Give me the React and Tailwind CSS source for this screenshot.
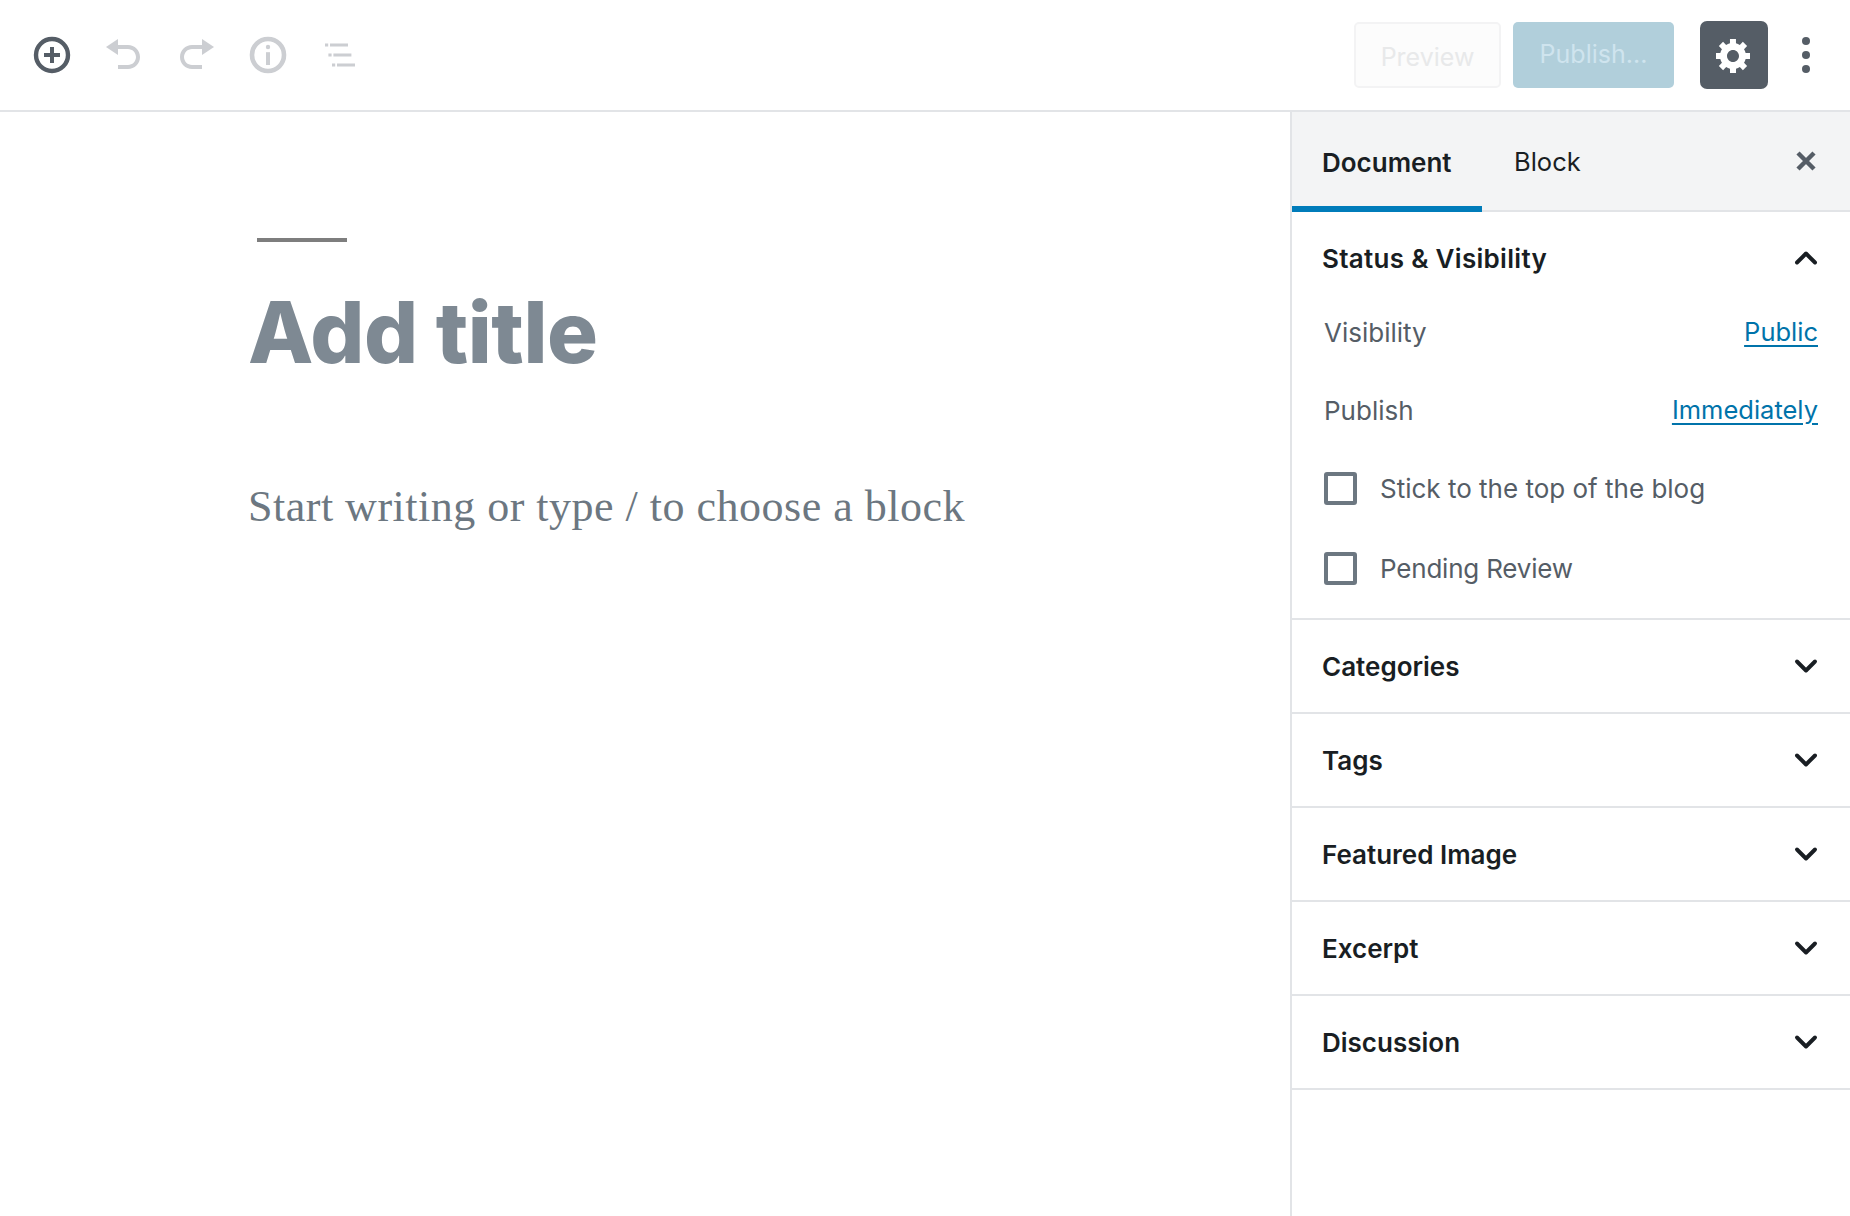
import { ChevronDown, ChevronUp } from 'lucide-react';

const Glyph = ({ children, className }) => (
  <svg viewBox="0 0 20 20" className={`w-10 h-10 ${className}`} fill="currentColor">
    {children}
  </svg>
);

const sections = ['Categories', 'Tags', 'Featured Image', 'Excerpt', 'Discussion'];

const Toolbar = () => (
  <header className="h-[112px] shrink-0 flex items-center pl-[16px] pr-[24px] bg-white border-b-2 border-[#e2e4e7]">
    <div className="w-[72px] flex justify-center">
      <Glyph className="text-[#555d66]">
        <circle cx="10" cy="10" r="8" fill="none" stroke="currentColor" strokeWidth="2.2" />
        <path d="M9 6h2v3h3v2h-3v3H9v-3H6V9h3z" />
      </Glyph>
    </div>
    <div className="w-[72px] flex justify-center">
      <Glyph className="text-[#ccced2]">
        <path d="M12 5H7V2L1 6l6 4V7h5c2.2 0 4 1.8 4 4s-1.8 4-4 4H7v2h5c3.3 0 6-2.7 6-6s-2.7-6-6-6z" />
      </Glyph>
    </div>
    <div className="w-[72px] flex justify-center">
      <Glyph className="text-[#ccced2]">
        <path d="M8 5h5V2l6 4-6 4V7H8c-2.2 0-4 1.8-4 4s1.8 4 4 4h5v2H8c-3.3 0-6-2.7-6-6s2.7-6 6-6z" />
      </Glyph>
    </div>
    <div className="w-[72px] flex justify-center">
      <Glyph className="text-[#ccced2]">
        <circle cx="10" cy="10" r="8" fill="none" stroke="currentColor" strokeWidth="2.3" />
        <rect x="9" y="8.6" width="2" height="6.4" />
        <circle cx="10" cy="6" r="1.1" />
      </Glyph>
    </div>
    <div className="w-[72px] flex justify-center">
      <Glyph className="text-[#ccced2]">
        <path d="M2.5 4.2h1.6v1.6H2.5zM5 4.25h9v1.5H5zM4.2 9.2h1.6v1.6H4.2zM6.7 9.25h9v1.5h-9zM6 14.2h1.6v1.6H6zM8.5 14.25h9v1.5h-9z" />
      </Glyph>
    </div>

    <button className="ml-auto w-[147px] h-[66px] rounded-[5px] border-2 border-[#f3f3f4] bg-[#fcfcfc] text-[#e8e9ea] text-[25px] pt-[5px]">
      Preview
    </button>
    <button className="ml-[12px] w-[161px] h-[66px] rounded-[5px] bg-[#b1cfdb] text-[#cfe4ee] text-[25px]">
      Publish...
    </button>
    <button className="ml-[26px] w-[68px] h-[68px] rounded-[7px] bg-[#555d66] text-white flex items-center justify-center">
      <Glyph>
        <path d="M18 12h-2.18c-.17.7-.44 1.35-.81 1.93l1.54 1.54-2.1 2.1-1.54-1.54c-.58.36-1.23.64-1.91.81V19H8v-2.16c-.68-.17-1.33-.45-1.91-.81l-1.54 1.54-2.12-2.12 1.54-1.54c-.36-.58-.64-1.23-.81-1.91H1V9h2.16c.17-.7.44-1.35.81-1.93L2.43 5.53l2.1-2.1 1.54 1.54c.58-.36 1.23-.64 1.91-.81V2h3v2.16c.68.17 1.33.45 1.91.81l1.54-1.54 2.12 2.12-1.54 1.54c.36.58.64 1.23.81 1.91H18v3zm-8.5 1.5c1.66 0 3-1.34 3-3s-1.34-3-3-3-3 1.34-3 3 1.34 3 3 3z" />
      </Glyph>
    </button>
    <div className="ml-[18px] w-10 flex flex-col items-center gap-[6px]">
      <span className="w-2 h-2 rounded-full bg-[#555d66]" />
      <span className="w-2 h-2 rounded-full bg-[#555d66]" />
      <span className="w-2 h-2 rounded-full bg-[#555d66]" />
    </div>
  </header>
);

const Editor = () => (
  <main className="flex-1 pl-[248px] pt-[126px]">
    <div className="ml-[9px] w-[90px] h-[4px] bg-[#7e7e7e]" />
    <h1 className="mt-[41px] h-[100px] leading-[100px] text-[85px] font-extrabold tracking-[-0.5px] text-[#7e8993]">
      Add title
    </h1>
    <p className="mt-[94px] font-['Liberation_Serif',serif] text-[44px] leading-[60px] tracking-[0.5px] text-[#6c7781]">
      Start writing or type / to choose a block
    </p>
  </main>
);

const Sidebar = () => (
  <aside className="w-[560px] shrink-0 border-l-2 border-[#e2e4e7] flex flex-col">
    <div className="h-[100px] shrink-0 bg-[#f3f4f5] border-b-2 border-[#e2e4e7] flex items-stretch">
      <div className="relative w-[190px] flex items-center pl-[30px] pt-[2px] font-semibold text-[26px] text-[#191e23]">
        Document
        <span className="absolute left-0 right-0 bottom-[-2px] h-[6px] bg-[#007cba]" />
      </div>
      <div className="ml-[32px] pt-[3px] flex items-center text-[25.5px] text-[#191e23]">Block</div>
      <svg viewBox="0 0 20 20" className="ml-auto mr-[28px] w-8 h-8 self-center text-[#555d66]" fill="none" stroke="currentColor" strokeWidth="2.8">
        <path d="M5 5l10 10M15 5L5 15" />
      </svg>
    </div>

    <section className="h-[408px] shrink-0 border-b-2 border-[#e2e4e7] pl-[30px] pr-[32px]">
      <div className="h-[92px] flex items-center justify-between">
        <span className="pt-[1px] font-semibold text-[26px] tracking-[0.3px] text-[#191e23]">Status &amp; Visibility</span>
        <ChevronUp className="w-9 h-9 text-[#191e23] -mr-[6px]" strokeWidth={2.6} />
      </div>
      <div className="pl-[2px] pt-[5px] text-[26px] text-[#555d66]">
        <div className="h-[46px] flex items-center justify-between">
          <span>Visibility</span>
          <a className="text-[25.5px] text-[#0073aa] underline underline-offset-[4px]">Public</a>
        </div>
        <div className="mt-[32px] h-[46px] flex items-center justify-between">
          <span>Publish</span>
          <a className="text-[25.5px] text-[#0073aa] underline underline-offset-[4px]">Immediately</a>
        </div>
        <label className="mt-[32px] h-[46px] flex items-center">
          <span className="w-[33px] h-[33px] rounded-[3px] border-[4px] border-[#6c7781]" />
          <span className="ml-[23px]">Stick to the top of the blog</span>
        </label>
        <label className="mt-[34px] h-[46px] flex items-center">
          <span className="w-[33px] h-[33px] rounded-[3px] border-[4px] border-[#6c7781]" />
          <span className="ml-[23px] tracking-[-0.2px]">Pending Review</span>
        </label>
      </div>
    </section>

    {sections.map((name) => (
      <div
        key={name}
        className="h-[94px] shrink-0 border-b-2 border-[#e2e4e7] pl-[30px] pr-[32px] flex items-center justify-between"
      >
        <span className="pt-[1px] font-semibold text-[26px] text-[#191e23]">{name}</span>
        <ChevronDown className="w-9 h-9 text-[#191e23] -mr-[6px]" strokeWidth={2.6} />
      </div>
    ))}
  </aside>
);

export default function App() {
  return (
    <div className="w-[1850px] h-[1216px] overflow-hidden bg-white flex flex-col font-['Inter',sans-serif]">
      <Toolbar />
      <div className="flex-1 flex min-h-0">
        <Editor />
        <Sidebar />
      </div>
    </div>
  );
}
